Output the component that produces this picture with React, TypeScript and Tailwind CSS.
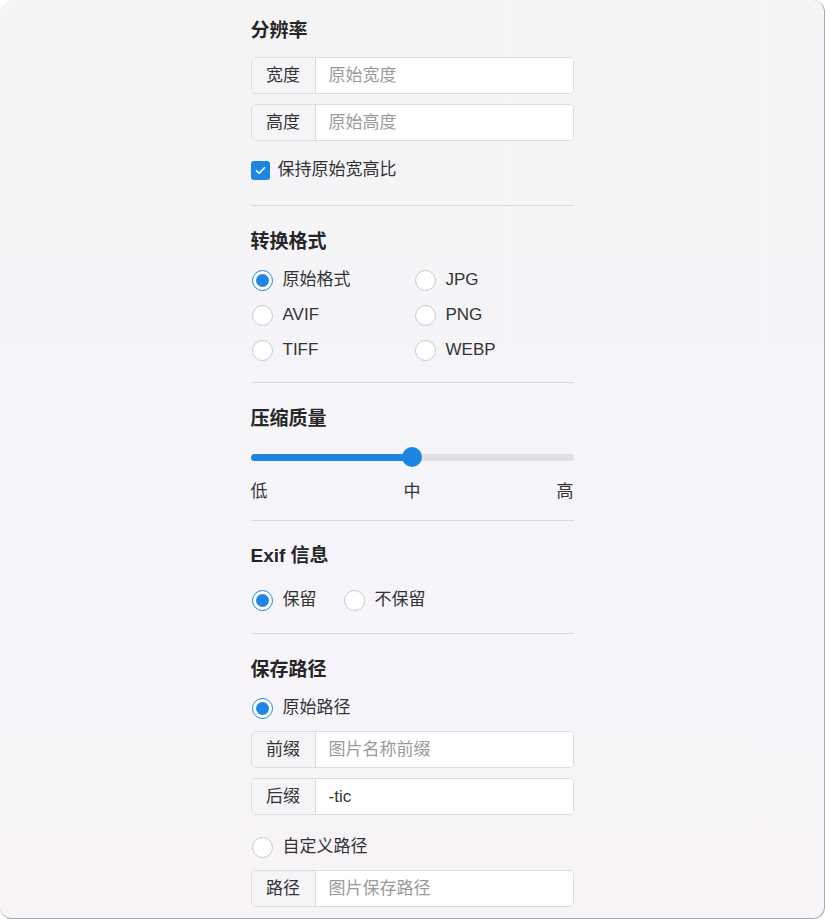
import React, { useState } from "react";

const FONT = { fontFamily: '"Liberation Sans", "Noto Sans CJK SC", sans-serif' };

interface AddonInputProps {
  label: string;
  placeholder: string;
  value?: string;
}

const AddonInput: React.FC<AddonInputProps> = ({ label, placeholder, value }) => {
  const [text, setText] = useState(value ?? "");
  return (
    <div className="flex h-[37px] rounded-[5px] border border-[#dcdcdf] bg-white overflow-hidden">
      <div className="w-[64px] shrink-0 flex items-center justify-center bg-[#f5f5f7] border-r border-[#dcdcdf] text-[17px] text-[#333]">
        {label}
      </div>
      <input
        className="flex-1 min-w-0 px-[13px] text-[17px] text-[#333] placeholder:text-[#9a9a9a] outline-none bg-white"
        placeholder={placeholder}
        value={text}
        onChange={(e) => setText(e.target.value)}
        style={FONT}
      />
    </div>
  );
};

interface RadioProps {
  label: string;
  checked: boolean;
  onSelect: () => void;
}

const Radio: React.FC<RadioProps> = ({ label, checked, onSelect }) => (
  <button
    type="button"
    onClick={onSelect}
    className="flex items-center h-6 text-left"
    style={FONT}
  >
    {checked ? (
      <span className="ml-[1px] w-[21px] h-[21px] rounded-full border-[1.5px] border-[#1e86e2] bg-white flex items-center justify-center">
        <span className="w-[13px] h-[13px] rounded-full bg-[#1e86e2]" />
      </span>
    ) : (
      <span className="ml-[1px] w-[21px] h-[21px] rounded-full border border-[#c9c9cc] bg-white" />
    )}
    <span className="ml-[10px] text-[17px] text-[#333] leading-6">{label}</span>
  </button>
);

const SectionTitle: React.FC<{ children: React.ReactNode }> = ({ children }) => (
  <h3 className="text-[19px] leading-6 font-semibold text-[#262626]">{children}</h3>
);

const Divider = () => <div className="h-px bg-[#dadadd]" />;

export default function App() {
  const [keepRatio, setKeepRatio] = useState(true);
  const [format, setFormat] = useState("原始格式");
  const [quality, setQuality] = useState(50);
  const [exif, setExif] = useState("保留");
  const [pathMode, setPathMode] = useState("原始路径");

  const formats = ["原始格式", "JPG", "AVIF", "PNG", "TIFF", "WEBP"];

  return (
    <div
      className="h-[919px] w-full rounded-[12px] border-r border-b border-[#a9a9ad] bg-gradient-to-b from-[#f5f5f6] via-[#f5f5fa] to-[#f8f4f7] overflow-hidden"
      style={FONT}
    >
      <div className="w-[323px] mx-auto pt-[19px]">
        {/* 分辨率 */}
        <SectionTitle>分辨率</SectionTitle>
        <div className="mt-[14px] flex flex-col gap-[10px]">
          <AddonInput label="宽度" placeholder="原始宽度" />
          <AddonInput label="高度" placeholder="原始高度" />
        </div>
        <button
          type="button"
          onClick={() => setKeepRatio(!keepRatio)}
          className="mt-[17px] flex items-center h-6"
          style={FONT}
        >
          <span
            className={`w-[19px] h-[19px] rounded-[3px] flex items-center justify-center ${
              keepRatio ? "bg-[#1e86e2]" : "bg-white border border-[#c9c9cc]"
            }`}
          >
            {keepRatio && (
              <svg viewBox="0 0 16 16" className="w-[13px] h-[13px]" fill="none">
                <path
                  d="M3 8.3l3.2 3.1L13 4.6"
                  stroke="white"
                  strokeWidth="2"
                  strokeLinecap="round"
                  strokeLinejoin="round"
                />
              </svg>
            )}
          </span>
          <span className="ml-[8px] text-[17px] text-[#333] leading-6">保持原始宽高比</span>
        </button>

        <div className="mt-[23px]">
          <Divider />
        </div>

        {/* 转换格式 */}
        <div className="mt-[24px]">
          <SectionTitle>转换格式</SectionTitle>
        </div>
        <div className="mt-[14px] grid grid-cols-[163px_1fr] gap-y-[11px]">
          {formats.map((f) => (
            <Radio key={f} label={f} checked={format === f} onSelect={() => setFormat(f)} />
          ))}
        </div>

        <div className="mt-[20px]">
          <Divider />
        </div>

        {/* 压缩质量 */}
        <div className="mt-[24px]">
          <SectionTitle>压缩质量</SectionTitle>
        </div>
        <div className="mt-[16px] relative h-[20px] flex items-center">
          <div className="w-full h-[7px] rounded-full bg-[#e1e1e4]" />
          <div
            className="absolute left-0 h-[7px] rounded-full bg-[#1e86e2]"
            style={{ width: `${quality}%` }}
          />
          <div
            className="absolute w-[20px] h-[20px] rounded-full bg-[#1e86e2] -translate-x-1/2"
            style={{ left: `${quality}%` }}
          />
          <input
            type="range"
            min={0}
            max={100}
            value={quality}
            onChange={(e) => setQuality(Number(e.target.value))}
            className="absolute inset-0 w-full opacity-0 cursor-pointer"
          />
        </div>
        <div className="mt-[13px] flex justify-between text-[17px] leading-6 text-[#333]">
          <span>低</span>
          <span>中</span>
          <span>高</span>
        </div>

        <div className="mt-[16px]">
          <Divider />
        </div>

        {/* Exif 信息 */}
        <div className="mt-[23px]">
          <SectionTitle>Exif 信息</SectionTitle>
        </div>
        <div className="mt-[20px] flex gap-[26px]">
          <Radio label="保留" checked={exif === "保留"} onSelect={() => setExif("保留")} />
          <Radio label="不保留" checked={exif === "不保留"} onSelect={() => setExif("不保留")} />
        </div>

        <div className="mt-[21px]">
          <Divider />
        </div>

        {/* 保存路径 */}
        <div className="mt-[24px]">
          <SectionTitle>保存路径</SectionTitle>
        </div>
        <div className="mt-[14px]">
          <Radio
            label="原始路径"
            checked={pathMode === "原始路径"}
            onSelect={() => setPathMode("原始路径")}
          />
        </div>
        <div className="mt-[11px] flex flex-col gap-[10px]">
          <AddonInput label="前缀" placeholder="图片名称前缀" />
          <AddonInput label="后缀" placeholder="" value="-tic" />
        </div>
        <div className="mt-[20px]">
          <Radio
            label="自定义路径"
            checked={pathMode === "自定义路径"}
            onSelect={() => setPathMode("自定义路径")}
          />
        </div>
        <div className="mt-[11px]">
          <AddonInput label="路径" placeholder="图片保存路径" />
        </div>
      </div>
    </div>
  );
}
